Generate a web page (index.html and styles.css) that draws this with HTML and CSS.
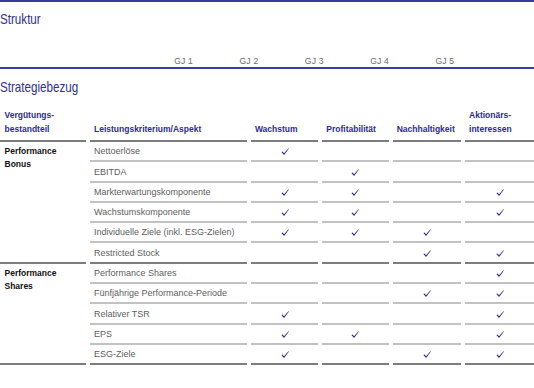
FILE: index.html
```html
<!DOCTYPE html>
<html lang="de">
<head>
<meta charset="utf-8">
<link rel="stylesheet" href="styles.css">
</head>
<body>
<div class="rule"></div>
<h2 class="title title-first"><span>Struktur</span></h2>
<div class="years">
  <span>GJ 1</span><span>GJ 2</span><span>GJ 3</span><span>GJ 4</span><span>GJ 5</span>
</div>
<div class="rule"></div>
<h2 class="title"><span>Strategiebezug</span></h2>
<svg width="0" height="0" class="defs"><defs><symbol id="chk" viewBox="0 0 9 8"><path d="M0.4 4.6 L1.7 3.9 L3.4 5.9 L8.5 0.3 L9 0.7 L3.7 7.8 L3.1 7.8 Z"/></symbol></defs></svg>
<table class="matrix">
  <colgroup>
    <col class="c1"><col class="c2"><col class="c3"><col class="c4"><col class="c5"><col class="c6">
  </colgroup>
  <thead>
    <tr>
      <th>Vergütungs-<br>bestandteil</th>
      <th>Leistungskriterium/Aspekt</th>
      <th>Wachstum</th>
      <th>Profitabilität</th>
      <th>Nachhaltigkeit</th>
      <th>Aktionärs-<br>interessen</th>
    </tr>
  </thead>
  <tbody>
    <tr>
      <td class="group" rowspan="6">Performance<br>Bonus</td>
      <td>Nettoerlöse</td>
      <td class="ck"><svg class="check"><use href="#chk"/></svg></td><td class="ck"></td><td class="ck"></td><td class="ck"></td>
    </tr>
    <tr>
      <td>EBITDA</td>
      <td class="ck"></td><td class="ck"><svg class="check"><use href="#chk"/></svg></td><td class="ck"></td><td class="ck"></td>
    </tr>
    <tr>
      <td>Markterwartungskomponente</td>
      <td class="ck"><svg class="check"><use href="#chk"/></svg></td><td class="ck"><svg class="check"><use href="#chk"/></svg></td><td class="ck"></td><td class="ck"><svg class="check"><use href="#chk"/></svg></td>
    </tr>
    <tr>
      <td>Wachstumskomponente</td>
      <td class="ck"><svg class="check"><use href="#chk"/></svg></td><td class="ck"><svg class="check"><use href="#chk"/></svg></td><td class="ck"></td><td class="ck"><svg class="check"><use href="#chk"/></svg></td>
    </tr>
    <tr>
      <td>Individuelle Ziele (inkl. ESG-Zielen)</td>
      <td class="ck"><svg class="check"><use href="#chk"/></svg></td><td class="ck"><svg class="check"><use href="#chk"/></svg></td><td class="ck"><svg class="check"><use href="#chk"/></svg></td><td class="ck"></td>
    </tr>
    <tr class="end">
      <td>Restricted Stock</td>
      <td class="ck"></td><td class="ck"></td><td class="ck"><svg class="check"><use href="#chk"/></svg></td><td class="ck"><svg class="check"><use href="#chk"/></svg></td>
    </tr>
    <tr>
      <td class="group" rowspan="5">Performance<br>Shares</td>
      <td>Performance Shares</td>
      <td class="ck"></td><td class="ck"></td><td class="ck"></td><td class="ck"><svg class="check"><use href="#chk"/></svg></td>
    </tr>
    <tr>
      <td>Fünfjährige Performance-Periode</td>
      <td class="ck"></td><td class="ck"></td><td class="ck"><svg class="check"><use href="#chk"/></svg></td><td class="ck"><svg class="check"><use href="#chk"/></svg></td>
    </tr>
    <tr>
      <td>Relativer TSR</td>
      <td class="ck"><svg class="check"><use href="#chk"/></svg></td><td class="ck"></td><td class="ck"></td><td class="ck"><svg class="check"><use href="#chk"/></svg></td>
    </tr>
    <tr>
      <td>EPS</td>
      <td class="ck"><svg class="check"><use href="#chk"/></svg></td><td class="ck"><svg class="check"><use href="#chk"/></svg></td><td class="ck"></td><td class="ck"><svg class="check"><use href="#chk"/></svg></td>
    </tr>
    <tr class="end">
      <td>ESG-Ziele</td>
      <td class="ck"><svg class="check"><use href="#chk"/></svg></td><td class="ck"></td><td class="ck"><svg class="check"><use href="#chk"/></svg></td><td class="ck"><svg class="check"><use href="#chk"/></svg></td>
    </tr>
  </tbody>
</table>
</body>
</html>
```

FILE: styles.css
```css
html, body {
  margin: 0;
  padding: 0;
  background: #fff;
}
body {
  width: 534px;
  font-family: "Liberation Sans", Arial, sans-serif;
  color: #555;
  overflow: hidden;
}
.rule {
  height: 2px;
  background: #3b3b9c;
}
.defs {
  position: absolute;
}
.title {
  margin: 0;
  font-weight: normal;
  font-size: 15px;
  line-height: 16px;
  color: #2f2f96;
  padding-top: 10px;
}
.title span {
  display: inline-block;
  transform: scaleX(0.775);
  transform-origin: left center;
}
.title-first {
  padding-top: 9px;
}
.years {
  display: flex;
  padding-left: 151px;
  height: 40px;
  align-items: flex-end;
  font-size: 8.5px;
  line-height: 11px;
  color: #6a6a6a;
  letter-spacing: 0.2px;
}
.years span {
  width: 65.3px;
  text-align: center;
}
.matrix {
  margin: 14px -4.5px 0;
  width: 543px;
  border-collapse: separate;
  border-spacing: 4.5px 0;
  table-layout: fixed;
}
.c1 { width: 86px; }
.c2 { width: 156px; }
.c3 { width: 67px; }
.c4 { width: 66px; }
.c5 { width: 68px; }
.c6 { width: 69px; }
.matrix th {
  text-align: left;
  vertical-align: bottom;
  font-weight: bold;
  font-size: 8.5px;
  line-height: 13.5px;
  color: #2b2b98;
  padding: 0 4px 4px;
  border-bottom: 2px solid #7d7d7d;
  white-space: nowrap;
}
.matrix th:first-child {
  padding-left: 5px;
}
.matrix td {
  font-size: 9px;
  line-height: 13px;
  padding: 3.3px 4px 2px;
  vertical-align: top;
  color: #5e5e5e;
  border-bottom: 2px solid #c2c2c2;
  white-space: nowrap;
}
.matrix td.group {
  font-weight: bold;
  font-size: 8.5px;
  color: #111;
  padding-left: 5px;
  border-bottom: 2px solid #7d7d7d;
}
.matrix tr.end td {
  border-bottom-color: #7d7d7d;
}
.matrix td.ck {
  text-align: center;
  fill: #2b2b98;
}
.check {
  display: inline-block;
  width: 8px;
  height: 7px;
  margin-top: 3px;
  vertical-align: top;
}
```
